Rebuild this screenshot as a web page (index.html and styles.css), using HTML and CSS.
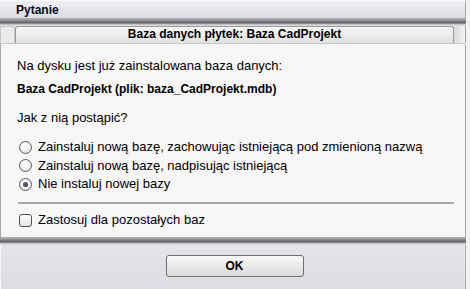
FILE: index.html
```html
<!DOCTYPE html>
<html>
<head>
<meta charset="utf-8">
<link rel="stylesheet" href="styles.css">
</head>
<body>
<div class="win">
  <div class="titlebar"><span class="title">Pytanie</span></div>
  <div class="sep"></div>
  <div class="tabs">
    <div class="stub"></div>
    <div class="tab">Baza danych płytek: Baza CadProjekt</div>
    <div class="rest"></div>
  </div>
  <div class="panel">
    <div class="line l1">Na dysku jest już zainstalowana baza danych:</div>
    <div class="line bold l2">Baza CadProjekt (plik: baza_CadProjekt.mdb)</div>
    <div class="line l3">Jak z nią postąpić?</div>
    <div class="options">
      <div class="opt"><span class="radio"></span>Zainstaluj nową bazę, zachowując istniejącą pod zmienioną nazwą</div>
      <div class="opt"><span class="radio"></span>Zainstaluj nową bazę, nadpisując istniejącą</div>
      <div class="opt"><span class="radio on"></span>Nie instaluj nowej bazy</div>
    </div>
    <div class="hr"></div>
    <div class="opt chk"><span class="box"></span>Zastosuj dla pozostałych baz</div>
  </div>
  <div class="sep"></div>
  <div class="footer"><div class="btn">OK</div></div>
</div>
</body>
</html>
```
FILE: styles.css
```css
html, body { margin: 0; padding: 0; }
body {
  width: 470px; height: 289px; overflow: hidden;
  background: #f2f2f2;
  font-family: "Liberation Sans", sans-serif;
  font-size: 13px; color: #000;
}
.win { width: 466px; display: flex; flex-direction: column; }
.titlebar {
  height: 18px; box-sizing: border-box;
  background: linear-gradient(#eeeef3, #dcdce4);
  border-right: 1px solid #a8a8ac; border-top: 1px solid #fafafa;
  display: flex; align-items: center; padding-left: 16px;
}
.title { font-weight: bold; font-size: 12px; color: #0a0a20; }
.sep {
  height: 8px;
  background: linear-gradient(#b4b4b8 0, #9a9a9e 2px, #6c6c70 4px, #5e5e62 5px, #b8b8bc 6px, #e6e6ea 8px);
}
.tabs { display: flex; height: 17px; background: #f0f0f0; }
.stub { width: 15px; box-sizing: border-box; border: 1px solid #c8c8c8; border-bottom: none; border-top-right-radius: 3px; background: #ececec; }
.tab {
  width: 439px; box-sizing: border-box;
  border: 1px solid #9c9c9c; border-bottom: none; border-radius: 3px 3px 0 0;
  background: linear-gradient(#f6f6f6, #e2e2e4);
  text-align: center; font-weight: bold; font-size: 12px;
  line-height: 15px;
}
.rest { flex: 1; background: linear-gradient(90deg, #d8d8d8, #f4f4f4); border-right: 1px solid #a0a0a0; }
.panel {
  height: 194px; box-sizing: border-box;
  background: #f7f7f7;
  border: 1px solid #a8a8a8; border-top: 1px solid #c8c8c8; border-bottom: none;
  border-top-right-radius: 4px;
  padding: 14px 0 0 16px;
}
.line { height: 16px; line-height: 16px; }
.bold { font-weight: bold; font-size: 12px; }
.l2 { margin-top: 7px; }
.l3 { margin-top: 13px; }
.options { margin-top: 13px; display: flex; flex-direction: column; gap: 2.5px; }
.opt { display: flex; align-items: center; height: 16px; line-height: 16px; }
.radio {
  width: 13px; height: 13px; border-radius: 50%; box-sizing: border-box;
  border: 1px solid #5a5a5a; background: radial-gradient(circle at 45% 40%, #ffffff 20%, #d4d4d4);
  margin: 0 6px 0 2px; position: relative;
}
.radio.on::after {
  content: ""; position: absolute; left: 3px; top: 3px; width: 5px; height: 5px; border-radius: 50%;
  background: radial-gradient(circle at 40% 35%, #6a6a7e, #1e1e2e);
}
.hr { height: 2px; background: #a8a8a8; width: 436px; margin: 10px 0 8px 1px; }
.box {
  width: 13px; height: 13px; box-sizing: border-box; border-radius: 3px;
  border: 1px solid #505050; background: linear-gradient(#ffffff, #e4e4e4);
  margin: 0 6px 0 2px;
}
.footer {
  height: 44px; box-sizing: border-box;
  background: linear-gradient(#e4e4ea, #dcdce2);
  border-left: 1px solid #f8f8f8; border-right: 1px solid #b0b0b0;
  display: flex; justify-content: center; padding-top: 10px; padding-left: 3px;
}
.btn {
  width: 138px; height: 22px; box-sizing: border-box;
  border: 1px solid #707070; border-radius: 3px;
  background: linear-gradient(#fafafa, #e8e8e8 50%, #dadada);
  display: flex; align-items: center; justify-content: center;
  font-weight: bold; font-size: 12px;
}
```
